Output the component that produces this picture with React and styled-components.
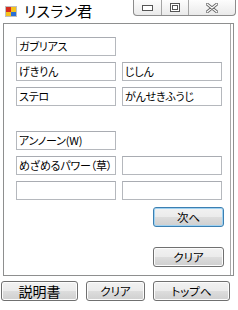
import React from "react";
import styled, { createGlobalStyle } from "styled-components";

const Global = createGlobalStyle`
  html, body {
    margin: 0;
    padding: 0;
    background: #ffffff;
  }
  body {
    font-family: "Noto Sans CJK JP", "Noto Sans", sans-serif;
    font-feature-settings: "palt";
    color: #000;
  }
`;

const Window = styled.div`
  width: 238px;
  height: 310px;
  background: #fff;
  display: flex;
  flex-direction: column;
  overflow: hidden;
`;

const TitleBar = styled.div`
  height: 23px;
  flex: none;
  display: flex;
  align-items: flex-start;
  position: relative;
`;

const AppIcon = styled.svg`
  margin: 6px 0 0 5px;
  flex: none;
`;

const TitleText = styled.span`
  margin: 1px 0 0 7px;
  font-size: 15px;
  line-height: 20px;
  letter-spacing: 0.3px;
`;

const Caption = styled.div`
  position: absolute;
  top: 0;
  left: 133px;
  display: flex;
  height: 15px;
  border: 1px solid #8c8c8c;
  border-top: none;
  border-radius: 0 0 4px 4px;
  background: linear-gradient(#fdfdfd, #eaeaea);
`;

const CapButton = styled.div`
  width: ${(p) => p.w}px;
  height: 15px;
  display: flex;
  align-items: center;
  justify-content: center;
  border-left: ${(p) => (p.first ? "none" : "1px solid #a4a4a4")};
`;

const Panel = styled.div`
  flex: none;
  margin-left: 3px;
  width: 231px;
  height: 253px;
  box-sizing: border-box;
  border: 1px solid #8e8f8f;
  box-shadow: inset -2px 0 0 #fff, inset -3px 0 0 #a9a9a9;
  display: flex;
  flex-direction: column;
  padding: 13px 0 0 12px;
`;

const Row = styled.div`
  display: flex;
  gap: 6px;
  margin-bottom: ${(p) => p.mb ?? 6}px;
`;

const TextBox = styled.div`
  width: 100px;
  height: 19px;
  box-sizing: border-box;
  border: 1px solid #b5b8bd;
  border-top-color: #a9acb2;
  background: #fff;
  font-size: 11px;
  letter-spacing: -0.2px;
  line-height: 17px;
  padding-left: 2px;
  white-space: nowrap;
  overflow: hidden;
`;

const RightCol = styled.div`
  display: flex;
  flex-direction: column;
  align-items: flex-end;
  padding-right: 9px;
  margin-top: ${(p) => p.mt}px;
`;

const Button = styled.div`
  width: ${(p) => p.w}px;
  height: 20px;
  box-sizing: border-box;
  border: 1px solid ${(p) => (p.focus ? "#3c7fb1" : "#707070")};
  border-radius: 3px;
  background: linear-gradient(#f2f2f2 0%, #ebebeb 50%, #dddddd 51%, #cfcfcf 100%);
  box-shadow: inset 0 0 0 1px ${(p) => (p.focus ? "#9fd2f2" : "#fcfcfc")};
  display: flex;
  align-items: center;
  justify-content: center;
  font-size: ${(p) => p.fs || 11.5}px;
  margin-bottom: ${(p) => p.mb || 0}px;
`;

const BottomBar = styled.div`
  display: flex;
  padding: 5px 0 0 1px;
  gap: 8px;
`;

const textRows = [
  ["ガブリアス", null],
  ["げきりん", "じしん"],
  ["ステロ", "がんせきふうじ"],
];

const lowerRows = [
  ["アンノーン(W)", null],
  ["めざめるパワー（草）", ""],
  ["", ""],
];

export default function App() {
  return (
    <>
      <Global />
      <Window>
        <TitleBar>
          <AppIcon width="12" height="11" viewBox="0 0 12 11">
            <rect x="0" y="0" width="12" height="11" fill="#bfbfbf" />
            <rect x="1" y="1" width="5" height="5" fill="#d62b1e" />
            <rect x="6" y="1" width="5" height="5" fill="#f5c21b" />
            <rect x="1" y="6" width="5" height="4" fill="#f5c21b" />
            <rect x="6" y="6" width="5" height="4" fill="#2a6fd6" />
          </AppIcon>
          <TitleText>リスラン君</TitleText>
          <Caption>
            <CapButton w={27} first>
              <svg width="11" height="6" viewBox="0 0 11 6">
                <rect x="0.5" y="0.5" width="10" height="5" fill="#fff" stroke="#555" />
              </svg>
            </CapButton>
            <CapButton w={26}>
              <svg width="10" height="9" viewBox="0 0 10 9">
                <rect x="0.5" y="0.5" width="9" height="8" fill="#fff" stroke="#555" />
                <rect x="2.5" y="2.5" width="5" height="4" fill="none" stroke="#555" />
              </svg>
            </CapButton>
            <CapButton w={46}>
              <svg width="12" height="10" viewBox="0 0 12 10">
                <path d="M1 1 L11 9 M11 1 L1 9" stroke="#666" strokeWidth="3" strokeLinecap="round" />
                <path d="M1 1 L11 9 M11 1 L1 9" stroke="#fff" strokeWidth="1.2" strokeLinecap="round" />
              </svg>
            </CapButton>
          </Caption>
        </TitleBar>
        <Panel>
          {textRows.map(([a, b], i) => (
            <Row key={i} mb={i === 2 ? 25 : 6}>
              <TextBox>{a}</TextBox>
              {b !== null && <TextBox>{b}</TextBox>}
            </Row>
          ))}
          {lowerRows.map(([a, b], i) => (
            <Row key={i}>
              <TextBox>{a}</TextBox>
              {b !== null && <TextBox>{b}</TextBox>}
            </Row>
          ))}
          <RightCol mt={1}>
            <Button w={71} focus mb={20}>
              次へ
            </Button>
            <Button w={71}>クリア</Button>
          </RightCol>
        </Panel>
        <BottomBar>
          <Button w={77} fs={14}>
            説明書
          </Button>
          <Button w={59}>クリア</Button>
          <Button w={77}>トップへ</Button>
        </BottomBar>
      </Window>
    </>
  );
}
